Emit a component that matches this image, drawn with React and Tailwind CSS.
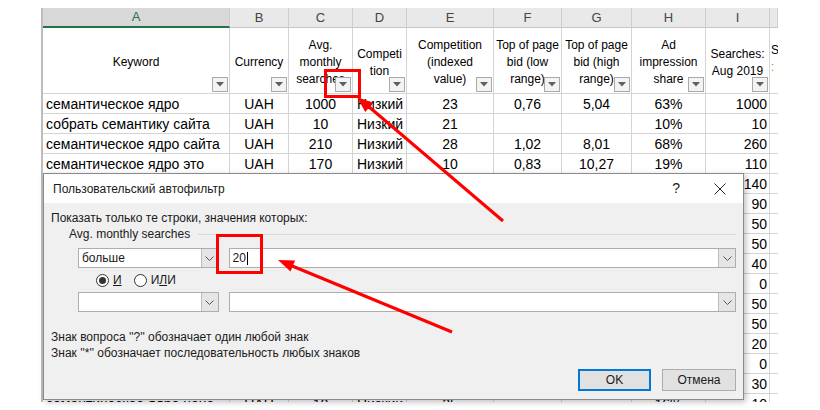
import React from 'react'

const cols = [
  { w: 'A', head: ['Keyword'], align: 'text-left pl-[3px]' },
  { w: 'B', head: ['Currency'], align: 'text-center' },
  { w: 'C', head: ['Avg.', 'monthly', 'searches'], align: 'text-center' },
  { w: 'D', head: ['Competi', 'tion'], align: 'text-left pl-[4px]' },
  { w: 'E', head: ['Competition', '(indexed', 'value)'], align: 'text-center' },
  { w: 'F', head: ['Top of page', 'bid (low', 'range)'], align: 'text-center' },
  { w: 'G', head: ['Top of page', 'bid (high', 'range)'], align: 'text-center' },
  { w: 'H', head: ['Ad', 'impression', 'share'], align: 'text-center' },
  { w: 'I', head: ['Searches:', 'Aug 2019'], align: 'text-right pr-[2px]' },
]

const rows = [
  ['семантическое ядро', 'UAH', '1000', 'Низкий', '23', '0,76', '5,04', '63%', '1000'],
  ['собрать семантику сайта', 'UAH', '10', 'Низкий', '21', '', '', '10%', '10'],
  ['семантическое ядро сайта', 'UAH', '210', 'Низкий', '28', '1,02', '8,01', '68%', '260'],
  ['семантическое ядро это', 'UAH', '170', 'Низкий', '10', '0,83', '10,27', '19%', '110'],
  ['семантика сайта', 'UAH', '140', 'Низкий', '15', '0,71', '4,12', '22%', '140'],
  ['составление семантического ядра', 'UAH', '90', 'Низкий', '31', '1,10', '9,45', '41%', '90'],
  ['семантическое ядро пример', 'UAH', '50', 'Низкий', '12', '', '', '10%', '50'],
  ['сбор семантики', 'UAH', '50', 'Низкий', '26', '0,95', '7,30', '35%', '50'],
  ['семантическое ядро для сайта', 'UAH', '40', 'Низкий', '18', '', '', '10%', '40'],
  ['ядро сайта', 'UAH', '0', 'Низкий', '0', '', '', '', '0'],
  ['подбор семантического ядра', 'UAH', '50', 'Низкий', '33', '1,25', '9,80', '44%', '50'],
  ['семантика для сайта', 'UAH', '50', 'Низкий', '20', '', '', '10%', '50'],
  ['семантическое ядро онлайн', 'UAH', '20', 'Низкий', '14', '', '', '10%', '20'],
  ['что такое семантика сайта', 'UAH', '0', 'Низкий', '0', '', '', '', '0'],
  ['как собрать семантическое ядро', 'UAH', '30', 'Низкий', '22', '', '', '10%', '30'],
  ['семантическое ядро цена', 'UAH', '10', 'Низкий', '25', '', '', '16%', '10'],
]

const grid = 'grid grid-cols-[187px_59px_64px_54px_87px_68px_70px_74px_64px_8px]'

function FilterBtn() {
  return (
    <div className="absolute right-[1px] bottom-[1px] w-[16px] h-[15px] bg-[#f3f3f3] border border-[#a9a9a9] flex items-center justify-center">
      <svg width="8" height="5" viewBox="0 0 8 5"><path d="M0 0 L8 0 L4 4.5 Z" fill="#5f5f5f" /></svg>
    </div>
  )
}

function Chevron() {
  return (
    <div className="w-[17px] h-full bg-[#e5e5e5] border-l border-[#bdbdbd] flex items-center justify-center">
      <svg width="9" height="5" viewBox="0 0 9 5"><path d="M0.5 0.5 L4.5 4.5 L8.5 0.5" fill="none" stroke="#555" strokeWidth="1" /></svg>
    </div>
  )
}

function Radio({ on }) {
  return (
    <div className="w-[13px] h-[13px] rounded-full border border-[#333] bg-white flex items-center justify-center">
      {on && <div className="w-[7px] h-[7px] rounded-full bg-[#333]" />}
    </div>
  )
}

export default function App() {
  return (
    <div className="relative w-[820px] h-[410px] overflow-hidden bg-white font-['Liberation_Sans',sans-serif] text-black">
      {/* Sheet (screenshot is cut at ~402px) */}
      <div className="ml-[41px] mt-[8px] w-[737px] h-[394px] overflow-hidden border-l-2 border-[#bdbdbd]">
        <div className={grid}>
          {['A', 'B', 'C', 'D', 'E', 'F', 'G', 'H', 'I', ''].map((l, i) => (
            <div
              key={i}
              className={
                'h-[20px] flex items-center justify-center text-[13px] border-r border-[#cfcfcf] ' +
                (i === 0 ? 'bg-[#d9d9d9] text-[#217346] border-b-2 border-b-[#217346]' : 'bg-[#e9e9e9] text-[#444] border-b border-b-[#c6c6c6]')
              }
            >
              {l}
            </div>
          ))}
        </div>
        <div className={grid}>
          {cols.map((c, i) => (
            <div key={i} className="relative h-[66px] flex items-center justify-center text-center text-[12px] leading-[17px] border-r border-b border-[#d4d4d4] overflow-hidden whitespace-nowrap">
              <div className="pt-[4px]">
                {c.head.map((h, j) => (
                  <div key={j}>{h}</div>
                ))}
              </div>
              <FilterBtn />
            </div>
          ))}
          <div className="h-[66px] border-b border-[#d4d4d4] overflow-hidden text-[12px] leading-[17px] pt-[14px] pl-[1px] whitespace-nowrap">
            <div>S</div>
            <div className="text-[#c98a1a]">:</div>
          </div>
        </div>
        {rows.map((r, ri) => (
          <div key={ri} className={grid}>
            {r.map((v, ci) => (
              <div key={ci} className={'h-[20px] leading-[20px] text-[14px] border-r border-b border-[#d4d4d4] overflow-hidden whitespace-nowrap ' + cols[ci].align}>
                {v}
              </div>
            ))}
            <div className="h-[20px] border-b border-[#d4d4d4]" />
          </div>
        ))}
      </div>

      {/* Custom autofilter dialog */}
      <div className="absolute left-[43px] top-[173px] w-[701px] h-[227px] border border-[#8a8a8a] bg-[#f0f0f0] shadow-[2px_2px_6px_rgba(0,0,0,0.25)] text-[12px] text-[#1a1a1a]">
        <div className="h-[29px] bg-white flex items-center pl-[9px]">
          <span className="text-[12px] flex-1">Пользовательский автофильтр</span>
          <span className="text-[14px] mr-[34px]">?</span>
          <svg width="12" height="12" viewBox="0 0 12 12" className="mr-[17px]">
            <path d="M0.5 0.5 L11.5 11.5 M11.5 0.5 L0.5 11.5" stroke="#222" strokeWidth="1" />
          </svg>
        </div>
        <div className="px-[7px]">
          <div className="mt-[8px] h-[14px] leading-[14px]">Показать только те строки, значения которых:</div>
          <div className="mt-[2px] h-[14px] leading-[14px] flex items-center pl-[18px]">
            <span>Avg. monthly searches</span>
            <div className="flex-1 ml-[8px] h-px bg-[#dadada]" />
          </div>
          <div className="mt-[7px] flex pl-[27px] gap-[10px]">
            <div className="w-[141px] h-[20px] bg-white border border-[#adadad] flex">
              <span className="flex-1 pl-[3px] leading-[18px]">больше</span>
              <Chevron />
            </div>
            <div className="w-[509px] h-[20px] bg-white border border-[#adadad] flex">
              <span className="flex-1 pl-[3px] leading-[18px]">20<span className="inline-block w-px h-[13px] bg-black align-middle ml-px" /></span>
              <Chevron />
            </div>
          </div>
          <div className="mt-[5px] h-[14px] flex items-center pl-[45px]">
            <Radio on />
            <span className="ml-[4px] underline">И</span>
            <div className="ml-[12px]"><Radio /></div>
            <span className="ml-[4px]">И<span className="underline">Л</span>И</span>
          </div>
          <div className="mt-[5px] flex pl-[27px] gap-[10px]">
            <div className="w-[141px] h-[20px] bg-white border border-[#adadad] flex">
              <span className="flex-1" />
              <Chevron />
            </div>
            <div className="w-[509px] h-[20px] bg-white border border-[#adadad] flex">
              <span className="flex-1" />
              <Chevron />
            </div>
          </div>
          <div className="mt-[17px] leading-[16px]">Знак вопроса ''?'' обозначает один любой знак</div>
          <div className="leading-[16px]">Знак ''*'' обозначает последовательность любых знаков</div>
          <div className="mt-[8px] flex justify-end gap-[11px]">
            <div className="w-[73px] h-[22px] bg-[#e1e1e1] border-2 border-[#0078d7] flex items-center justify-center">OK</div>
            <div className="w-[74px] h-[22px] bg-[#e1e1e1] border border-[#adadad] flex items-center justify-center">Отмена</div>
          </div>
        </div>
      </div>

      {/* Annotations */}
      <svg className="absolute inset-0 pointer-events-none" width="820" height="410">
        <rect x="325.5" y="70.5" width="34" height="26" fill="none" stroke="#ff0000" strokeWidth="3" />
        <rect x="217.5" y="235.5" width="44" height="37" fill="none" stroke="#ff0000" strokeWidth="3" />
        <line x1="503" y1="221" x2="368" y2="106" stroke="#ff0000" strokeWidth="3" />
        <polygon points="357,97 373.1,102.8 365.3,112" fill="#ff0000" />
        <line x1="452" y1="332" x2="291" y2="265.5" stroke="#ff0000" strokeWidth="3" />
        <polygon points="278,260 295.1,260.6 290.5,271.6" fill="#ff0000" />
      </svg>
    </div>
  )
}
